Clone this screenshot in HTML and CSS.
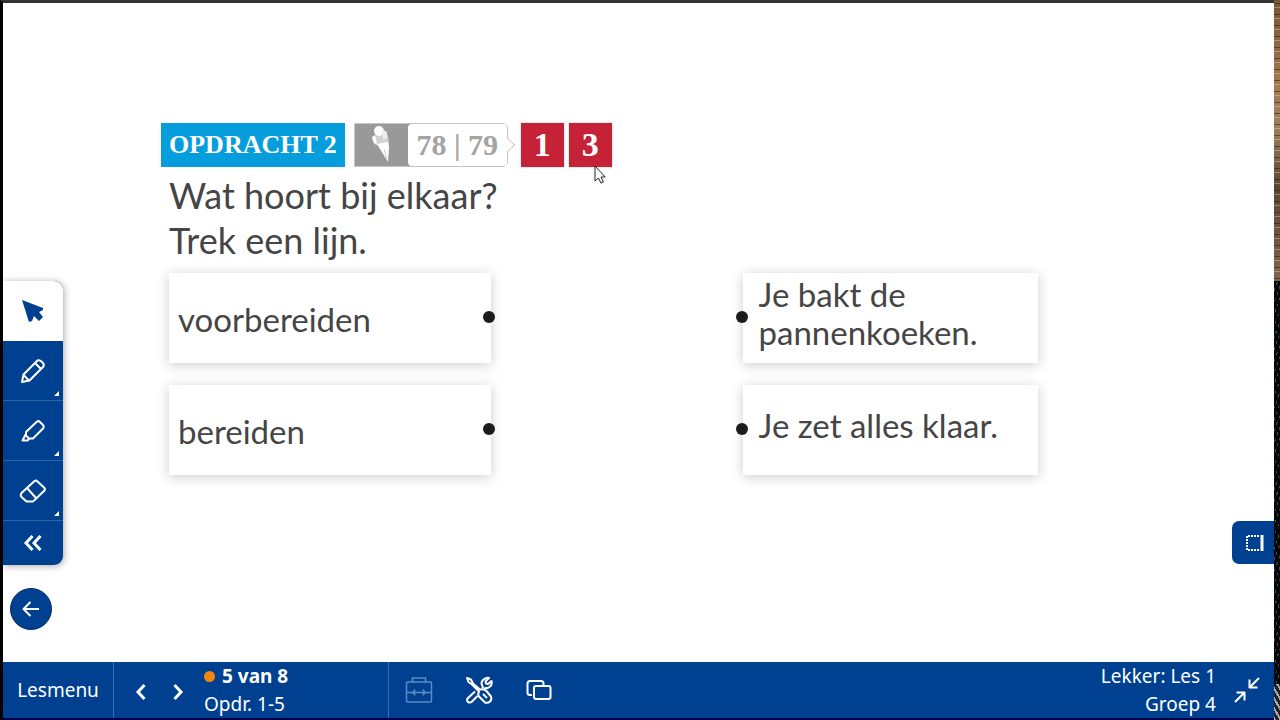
FILE: index.html
```html
<!DOCTYPE html>
<html lang="nl">
<head>
    <meta charset="UTF-8">
    <meta name="viewport" content="width=device-width, initial-scale=1">
    <title>Lekker: Les 1</title>
    <link rel="stylesheet" href="styles.css">
</head>
<body>
    <div class="screen">
        <div class="board">
            <div class="stage">
                <aside class="tools">
                    <div class="toolbar">
                        <button class="tool active" aria-label="Selecteren">
                            <svg width="24" height="24" viewBox="0 0 24 24"><path d="M1 1l21 8v2l-4 2 4 5-4 4-5-5-2 5-3 1z" fill="#004090"/></svg>
                        </button>
                        <button class="tool more" aria-label="Pen">
                            <svg class="line" width="26" height="26" viewBox="0 0 26 26"><path d="M2 24l1.500-7.500L17.500 2.500q2-1 4 1l1 1q2 2 1 4L9.500 22.500z"/><path d="M15 5l6 6M3.500 17l5.500 5.500"/></svg>
                        </button>
                        <button class="tool more" aria-label="Markeerstift">
                            <svg class="line" width="26" height="26" viewBox="0 0 26 26"><path d="M6 14L17 3.500q1.500-1 3 .5l3 3q1.500 1.500.5 3L13 20.500H9L6 17.500z"/><path d="M5.500 16.500L2.500 22.500h5l2-2"/></svg>
                        </button>
                        <button class="tool more" aria-label="Gum">
                            <svg class="line" width="28" height="26" viewBox="0 0 28 26"><path d="M2.500 15L15.500 3q1.500-1 3 .5l6.500 6q1.500 1.500.5 3L14 23.500H7.500L2.500 19q-1.500-2 0-4z"/><path d="M8 10l9 10"/></svg>
                        </button>
                        <button class="tool collapse" aria-label="Inklappen">
                            <svg class="thick" width="20" height="18" viewBox="0 0 20 18"><path d="M9.500 2L3 9l6.500 7M17.500 2L11 9l6.500 7"/></svg>
                        </button>
                    </div>
                    <button class="back" aria-label="Terug">
                        <svg class="line" width="20" height="18" viewBox="0 0 20 18"><path d="M18 9H3M9.500 2L2.500 9l7 7"/></svg>
                    </button>
                </aside>

                <main class="exercise">
                    <div class="labels">
                        <h1 class="task">OPDRACHT 2</h1>
                        <div class="pages">
                            <span class="ice">
                                <svg width="22" height="40" viewBox="0 0 22 40">
                                    <path d="M2 13l5-4 11 1 1 10-10 1-5-2z" fill="#d2d2d2"/>
                                    <circle cx="9" cy="6" r="5" fill="#fff"/>
                                    <path d="M12 4l5 3v6l-4 2z" fill="#ececec"/>
                                    <path d="M2 12l3-2 2 9-3-1z" fill="#fff"/>
                                    <path d="M7 19l11-2 1 5-1 15-8-13z" fill="#fff"/>
                                    <path d="M14 24l3 10" stroke="#c8c8c8"/>
                                </svg>
                            </span>
                            <span class="numbers">78 | 79</span>
                        </div>
                        <span class="level">1</span>
                        <span class="level">3
                            <svg class="cursor" width="12" height="19" viewBox="0 0 12 19"><path d="M1 1v15l3.500-3 2.500 5.200 2.400-1.200L7 12h4.200z" fill="#fff" stroke="#222"/></svg>
                        </span>
                    </div>
                    <p class="question">Wat hoort bij elkaar?<br>Trek een lijn.</p>
                    <div class="pairs">
                        <div class="words">
                            <button class="card word">voorbereiden</button>
                            <button class="card word">bereiden</button>
                        </div>
                        <div class="meanings">
                            <button class="card meaning">Je bakt de<br>pannenkoeken.</button>
                            <button class="card meaning">Je zet alles klaar.</button>
                        </div>
                    </div>
                </main>

                <button class="panel" aria-label="Zijpaneel">
                    <svg width="20" height="18" viewBox="0 0 20 18" fill="none" stroke="#fff" stroke-width="2">
                        <path d="M14 2H2v14h12" stroke-dasharray="2 1"/><path d="M17 1v16" stroke-width="3"/>
                    </svg>
                </button>
            </div>

            <footer class="bar">
                <button class="menu">Lesmenu</button>
                <nav class="steps">
                    <button class="arrow" aria-label="Vorige"><svg class="thick" width="12" height="18" viewBox="0 0 12 18"><path d="M9.500 2L3 9l6.500 7"/></svg></button>
                    <button class="arrow" aria-label="Volgende"><svg class="thick" width="12" height="18" viewBox="0 0 12 18"><path d="M2.500 2L9 9l-6.500 7"/></svg></button>
                    <div class="progress">
                        <strong class="current">5 van 8</strong>
                        <span>Opdr. 1-5</span>
                    </div>
                </nav>
                <div class="extras">
                    <button class="extra" aria-label="Koffer" disabled>
                        <svg width="28" height="26" viewBox="0 0 28 26" fill="none" stroke="#5b8cc4" stroke-width="1.500"><rect x="1.500" y="5" width="25" height="20" rx="1"/><path d="M7.500 5V1h13v4M1.500 15.500h6l2-2v4l-2-2M10 15.500h8M26.500 15.500h-6l-2-2v4l2-2"/></svg>
                    </button>
                    <button class="extra" aria-label="Gereedschap">
                        <svg class="line" width="28" height="28" viewBox="0 0 28 28">
                            <path d="M17 12l1-1q-3-4 0-7 3-3 6-2l-3.500 3.500.5 2 2 .5L26.500 5q1 4-2 6-2 1.500-4 1l-2 2"/>
                            <path d="M10 15.500l-7.500 7q-1 2 .5 3.500 2 1 3.500 0l6-6"/>
                            <path d="M2 2l4 1.500 2 4 7 6q4-1 6 1l5 6q1 3-1 5t-5 1l-6-6q-1.500-2 0-5L7 8.500 3.500 6z"/>
                            <path d="M18 18l4 4"/>
                        </svg>
                    </button>
                    <button class="extra" aria-label="Vensters">
                        <svg class="line" width="26" height="22" viewBox="0 0 26 22"><path d="M6 16H4q-2.500 0-2.500-2.500v-9Q1.500 2 4 2h11q2.500 0 2.500 2.500V6"/><rect x="8" y="7" width="16.500" height="13" rx="2"/></svg>
                    </button>
                </div>
                <div class="lesson">
                    <span>Lekker: Les 1</span>
                    <span>Groep 4</span>
                </div>
                <button class="shrink" aria-label="Volledig scherm verlaten">
                    <svg class="line" width="28" height="28" viewBox="0 0 28 28"><path d="M26 2L16.500 11.500M16.500 3.500v8h8M2 26l9.500-9.500M3.500 16.500h8v8"/></svg>
                </button>
            </footer>
        </div>
        <div class="edge"></div>
    </div>
</body>
</html>
```
FILE: styles.css
```css
* {
    box-sizing: border-box;
}

body {
    margin: 0;
    background: #fff;
    color: #454545;
    font-family: Lato, "Open Sans", sans-serif;
}

button {
    margin: 0;
    padding: 0;
    border: none;
    background: none;
    color: inherit;
    font: inherit;
    cursor: pointer;
}

svg {
    display: block;
}

.line,
.thick {
    fill: none;
    stroke: #fff;
    stroke-width: 2;
    stroke-linejoin: round;
}

.thick {
    stroke-width: 3;
    stroke-linejoin: miter;
}

.screen {
    display: flex;
    min-height: 100vh;
}

.board {
    flex: 1;
    display: flex;
    flex-direction: column;
    border-left: 3px solid #000;
    border-top: 3px solid #333;
    border-bottom: 2px solid #00004a;
}

.stage {
    flex: 1;
    display: flex;
}

/* strip along the right side of the screen */
.edge {
    width: 6px;
    background:
        repeating-linear-gradient(transparent 0 3px, rgba(40, 20, 10, 0.5) 3px 4px, transparent 4px 7px, rgba(240, 215, 170, 0.4) 7px 8px, transparent 8px 11px) top / 100% 39% no-repeat,
        repeating-linear-gradient(60deg, transparent 0 2px, rgba(0, 0, 0, 0.8) 2px 5px) bottom / 100% 61% no-repeat,
        repeating-linear-gradient(110deg, transparent 0 3px, rgba(80, 190, 120, 0.5) 3px 4px, transparent 4px 7px, rgba(190, 90, 190, 0.5) 7px 8px) bottom / 100% 61% no-repeat,
        linear-gradient(#76563a 0, #a07c50 12%, #9a8060 18%, #5c4433 26%, #806650 39%, #0c0c0c 39%, #0c0c0c 95%, #b0b0b0 95%);
}

/* left tools */
.tools {
    display: flex;
    flex-direction: column;
    justify-content: flex-end;
    align-items: flex-start;
    padding-bottom: 32px;
}

.toolbar {
    width: 60px;
    overflow: hidden;
    border-radius: 0 9px 9px 0;
    background: #004090;
    box-shadow: 1px 1px 7px rgba(0, 0, 0, 0.35);
}

.tool {
    position: relative;
    display: flex;
    align-items: center;
    justify-content: center;
    width: 100%;
    height: 60px;
    border-bottom: 1px solid #2c64a8;
}

.tool.active {
    background: #fff;
    border-bottom: none;
}

.tool.collapse {
    height: 44px;
    border-bottom: none;
}

.tool.more::after {
    content: "";
    position: absolute;
    right: 4px;
    bottom: 4px;
    border-left: 5px solid transparent;
    border-bottom: 5px solid #fff;
}

.back {
    display: flex;
    align-items: center;
    justify-content: center;
    width: 42px;
    height: 42px;
    margin: 23px 0 0 7px;
    border: 1px solid #0a2f66;
    border-radius: 50%;
    background: #004090;
}

/* exercise */
.exercise {
    flex: 1;
    padding: 120px 194px 0 98px;
}

.labels {
    display: flex;
    height: 44px;
    font-family: "Liberation Serif", serif;
    font-weight: bold;
    line-height: 44px;
}

.task {
    margin: 0 9px 0 0;
    padding: 0 8px;
    background: #069ddd;
    color: #fff;
    font-size: 26px;
    white-space: nowrap;
}

.pages {
    position: relative;
    display: flex;
    width: 154px;
    margin-right: 13px;
    border: 1px solid #c4c4c4;
    border-radius: 0 6px 6px 0;
    background: #999;
    line-height: 42px;
}

.pages::after {
    content: "";
    position: absolute;
    top: 16px;
    right: -6px;
    width: 9px;
    height: 9px;
    border: solid #ccc;
    border-width: 1px 1px 0 0;
    background: #fff;
    transform: rotate(45deg);
}

.ice {
    display: flex;
    align-items: center;
    justify-content: center;
    width: 53px;
}

.numbers {
    flex: 1;
    border-radius: 4px;
    background: #fff;
    color: #a3a3a3;
    font-size: 30px;
    text-align: center;
}

.level {
    position: relative;
    width: 43px;
    margin-right: 5px;
    background: #c62237;
    color: #fff;
    font-size: 34px;
    text-align: center;
    box-shadow: 0 0 2px rgba(0, 0, 0, 0.25);
}

.cursor {
    position: absolute;
    left: 25px;
    top: 42px;
}

.question {
    margin: 6px 0 10px;
    padding-left: 8px;
    font-size: 36px;
    line-height: 45px;
}

.pairs {
    display: flex;
    justify-content: space-between;
    padding-left: 8px;
}

.words,
.meanings {
    display: flex;
    flex-direction: column;
    gap: 22px;
}

.words {
    width: 37%;
}

.meanings {
    width: 34%;
}

.card {
    position: relative;
    display: flex;
    align-items: center;
    height: 90px;
    background: #fff;
    box-shadow: 0 2px 12px rgba(0, 0, 0, 0.2);
    font-size: 33px;
    line-height: 38px;
    text-align: left;
}

.word {
    padding: 2px 9px 0;
}

.meaning {
    padding: 0 16px 10px;
}

.card::after {
    content: "";
    position: absolute;
    top: 38px;
    width: 12px;
    height: 12px;
    border-radius: 50%;
    background: #1c1c1c;
}

.word::after {
    right: -4px;
}

.meaning::after {
    left: -7px;
}

.panel {
    display: flex;
    align-items: center;
    align-self: flex-end;
    width: 42px;
    height: 43px;
    margin-bottom: 98px;
    padding-left: 13px;
    border-radius: 7px 0 0 7px;
    background: #004090;
}

/* bottom bar */
.bar {
    display: flex;
    height: 56px;
    background: #004090;
    color: #fff;
    font-family: "Noto Sans", sans-serif;
    font-size: 19px;
    line-height: 28px;
}

.menu {
    width: 111px;
    border-right: 1px solid #3a6dad;
}

.steps {
    display: flex;
    align-items: center;
    width: 275px;
    padding-left: 14px;
    border-right: 1px solid #3a6dad;
}

.arrow {
    display: flex;
    justify-content: center;
    width: 26px;
    margin-right: 11px;
    padding-top: 4px;
}

.progress {
    display: flex;
    flex-direction: column;
    margin-left: 2px;
}

.current {
    display: flex;
    align-items: center;
    gap: 7px;
}

.current::before {
    content: "";
    width: 11px;
    height: 11px;
    border-radius: 50%;
    background: #f7860f;
}

.extras {
    flex: 1;
    display: flex;
    align-items: center;
}

.extra {
    display: flex;
    justify-content: center;
    width: 60px;
}

.lesson {
    display: flex;
    flex-direction: column;
    text-align: right;
}

.shrink {
    display: flex;
    align-items: center;
    justify-content: center;
    width: 58px;
    padding-left: 4px;
}
```
